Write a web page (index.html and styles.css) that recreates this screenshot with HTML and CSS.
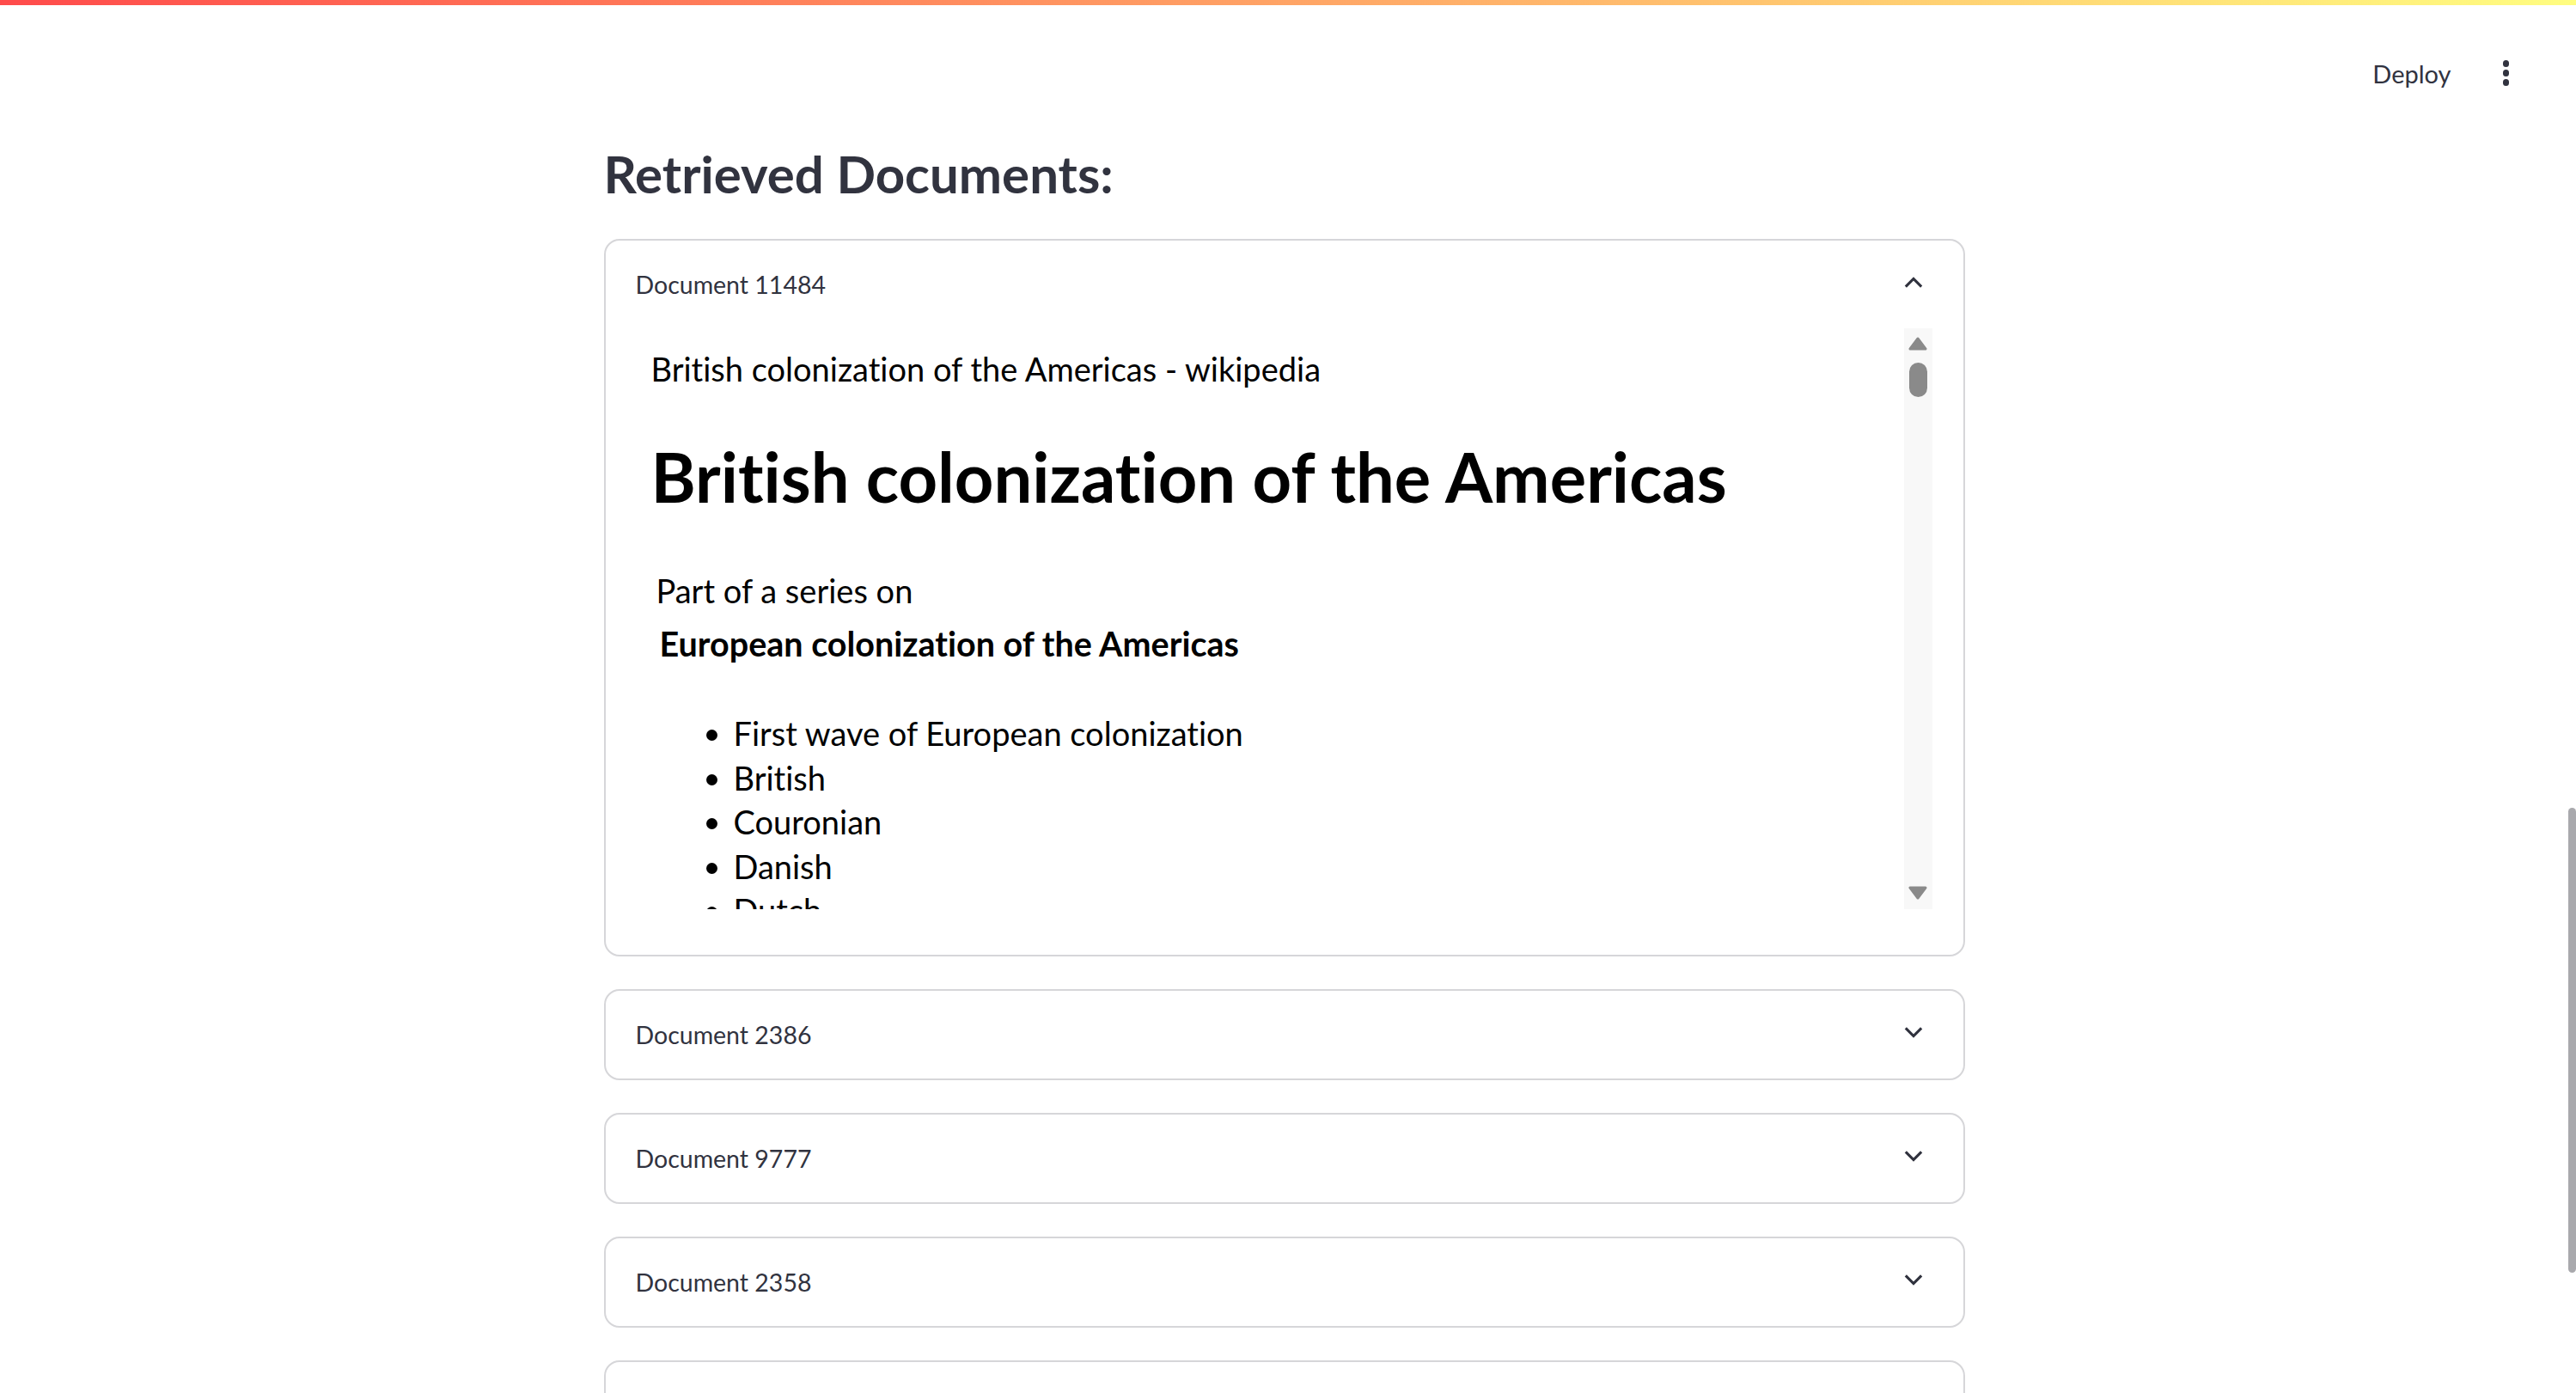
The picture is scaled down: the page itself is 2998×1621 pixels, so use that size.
FILE: index.html
```html
<!DOCTYPE html>
<html lang="en">
<head>
<meta charset="utf-8">
<title>Retrieved Documents</title>
<link rel="stylesheet" href="styles.css">
</head>
<body>
<div class="decoration"></div>
<div class="shell">
  <div class="app">
    <header class="topbar">
      <span class="deploy">Deploy</span>
      <span class="kebab"><i></i><i></i><i></i></span>
    </header>
    <main class="main">
      <h3 class="title">Retrieved Documents:</h3>
      <div class="stack">
        <section class="exp">
          <div class="exp-head">
            <span class="exp-label">Document 11484</span>
            <svg class="chev" viewBox="0 0 24 14" width="22" height="13"><path d="M2 12.5 L12 2.5 L22 12.5" fill="none" stroke="#31333f" stroke-width="3.4"/></svg>
          </div>
          <div class="exp-body">
            <div class="frame">
              <div class="frame-content">
                <div class="doc-title">British colonization of the Americas - wikipedia</div>
                <h1 class="doc-h1">British colonization of the Americas</h1>
                <div class="series">Part of a series on</div>
                <div class="series-name">European colonization of the Americas</div>
                <ul class="doc-list">
                  <li>First wave of European colonization</li>
                  <li>British</li>
                  <li>Couronian</li>
                  <li>Danish</li>
                  <li>Dutch</li>
                </ul>
              </div>
              <div class="frame-scroll">
                <svg class="sarrow" viewBox="0 0 22 16" width="22" height="16"><path d="M11 2 L20 14 L2 14 Z" fill="#8a8a8a" stroke="#8a8a8a" stroke-width="3" stroke-linejoin="round"/></svg>
                <div class="sthumb"></div>
                <div class="sspacer"></div>
                <svg class="sarrow" viewBox="0 0 22 16" width="22" height="16"><path d="M2 2 L20 2 L11 14 Z" fill="#8a8a8a" stroke="#8a8a8a" stroke-width="3" stroke-linejoin="round"/></svg>
              </div>
            </div>
          </div>
        </section>
        <section class="exp">
          <div class="exp-head">
            <span class="exp-label">Document 2386</span>
            <svg class="chev" viewBox="0 0 24 14" width="22" height="13"><path d="M2 1.5 L12 11.5 L22 1.5" fill="none" stroke="#31333f" stroke-width="3.4"/></svg>
          </div>
        </section>
        <section class="exp">
          <div class="exp-head">
            <span class="exp-label">Document 9777</span>
            <svg class="chev" viewBox="0 0 24 14" width="22" height="13"><path d="M2 1.5 L12 11.5 L22 1.5" fill="none" stroke="#31333f" stroke-width="3.4"/></svg>
          </div>
        </section>
        <section class="exp">
          <div class="exp-head">
            <span class="exp-label">Document 2358</span>
            <svg class="chev" viewBox="0 0 24 14" width="22" height="13"><path d="M2 1.5 L12 11.5 L22 1.5" fill="none" stroke="#31333f" stroke-width="3.4"/></svg>
          </div>
        </section>
        <section class="exp">
          <div class="exp-head"></div>
        </section>
      </div>
    </main>
  </div>
  <div class="page-scroll"><div class="page-thumb"></div></div>
</div>
</body>
</html>
```
FILE: styles.css
```css
* { box-sizing: border-box; }
html, body { margin: 0; padding: 0; }
body {
  width: 2998px;
  height: 1621px;
  overflow: hidden;
  background: #ffffff;
  font-family: "Lato", "Open Sans", sans-serif;
  font-variant-ligatures: none;
  color: #31333f;
}
.decoration {
  height: 6px;
  background: linear-gradient(90deg, #ff4b4b, #fffd80);
}
.shell {
  display: flex;
  height: 1615px;
}
.app {
  flex: 1;
  min-width: 0;
}
.topbar {
  height: 158px;
  display: flex;
  justify-content: flex-end;
  align-items: center;
  gap: 60px;
  padding-right: 69px;
}
.deploy {
  font-size: 29px;
  line-height: 1;
  color: #31333f;
}
.kebab {
  display: flex;
  flex-direction: column;
  gap: 3.5px;
}
.kebab i {
  display: block;
  width: 7.5px;
  height: 7.5px;
  border-radius: 50%;
  background: #31333f;
}
.main {
  width: 1584px;
  margin: 0 auto;
}
.title {
  margin: 0 0 38px;
  font-size: 60px;
  line-height: 76px;
  font-weight: 700;
  color: #31333f;
}
.stack {
  display: flex;
  flex-direction: column;
  gap: 38px;
}
.exp {
  border: 2px solid #d6d6d9;
  border-radius: 18px;
  background: #fff;
  overflow: hidden;
}
.exp-head {
  height: 102px;
  display: flex;
  align-items: center;
  justify-content: space-between;
  padding: 0 47px 0 35px;
}
.exp-label {
  font-size: 28.5px;
  color: #31333f;
}
.chev { display: block; margin-top: -5px; }
.exp-body {
  padding: 0 36px 53px 34px;
}
.frame {
  display: flex;
  height: 676px;
}
.frame-content {
  flex: 1;
  min-width: 0;
  overflow: hidden;
  padding: 22px 18px 0 19px;
  color: #000;
  font-size: 38px;
  line-height: 51.5px;
}
.doc-title { margin: 0; }
.doc-h1 {
  margin: 49px 0 57px;
  font-size: 79.5px;
  line-height: 100px;
  font-weight: 700;
}
.series { padding-left: 6px; }
.series-name {
  padding-left: 10px;
  margin-top: 9.5px;
  font-size: 39.5px;
  font-weight: 700;
}
.doc-list {
  margin: 54px 0 0;
  padding-left: 96px;
}
.frame-scroll {
  width: 33px;
  background: #f8f8f8;
  display: flex;
  flex-direction: column;
  align-items: center;
  padding: 10px 0 11px;
}
.sarrow { display: block; }
.sthumb {
  margin-top: 14px;
  width: 21px;
  height: 40px;
  border-radius: 11px;
  background: #8a8a8a;
}
.sspacer { flex: 1; }
.page-scroll {
  width: 9px;
  padding-top: 934px;
}
.page-thumb {
  width: 9px;
  height: 541px;
  border-radius: 5px;
  background: #a9a9ad;
}
```
